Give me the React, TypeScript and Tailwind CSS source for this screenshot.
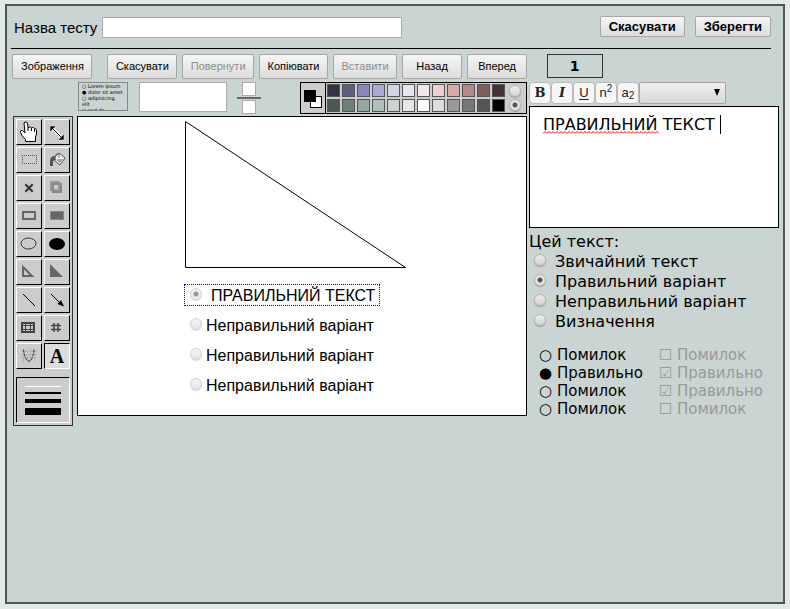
import { useState } from "react";
import type { ReactNode } from "react";

const radioClass =
  "size-3 shrink-0 appearance-none rounded-full border border-[#b4b4b4] bg-linear-to-b from-[#eeeeee] to-[#d4d4d4] shadow-[0_1px_1px_rgba(0,0,0,0.25)] checked:bg-[radial-gradient(circle,#555_0,#555_2px,#e4e4e4_3px)] disabled:opacity-60";

const pushClass =
  "rounded-xs border border-[#a6a6a6] bg-linear-to-b from-[#f6f6f6] to-[#dcdcdc] text-black disabled:text-[#8c8c8c]";

const darkSwatches = [
  "bg-[#333344]", "bg-[#5d5d80]", "bg-[#8888b8]", "bg-[#aaaad8]", "bg-[#d2d2e8]", "bg-[#e6e6f2]",
  "bg-[#f2e6e6]", "bg-[#e8d2d2]", "bg-[#d8aaaa]", "bg-[#b88888]", "bg-[#805d5d]", "bg-[#443333]",
];
const greySwatches = [
  "bg-[#4c5855]", "bg-[#6f807b]", "bg-[#93a8a3]", "bg-[#afbfbb]", "bg-[#cad4d2]", "bg-[#e4e8e6]",
  "bg-white", "bg-[#dddddd]", "bg-[#999999]", "bg-[#777777]", "bg-[#555555]", "bg-black",
];

const commands = [
  { label: "Скасувати" },
  { label: "Повернути", disabled: true },
  { label: "Копіювати" },
  { label: "Вставити", disabled: true },
  { label: "Назад" },
  { label: "Вперед" },
];

const tools: { name: string; icon: ReactNode }[] = [
  {
    name: "Рука",
    icon: (
      <path
        d="M8 2h1.5l1 1 .5 5 1-1h1.5l1 1 1-.5h1l1 1h1l1 1.5v4l-1 3v4.5h-10v-2l-3.5-4-1.5-3V11l1-.5h1L8 13 7 3zM11 8v3M14.500 8v3M17.500 9v3"
        fill="#fff" stroke="#000" strokeWidth="1"
      />
    ),
  },
  {
    name: "Змінити розмір",
    icon: (
      <>
        <path d="M6 7l12 12" stroke="#fff" strokeWidth="3" />
        <path d="M6 7l12 12" stroke="#000" strokeWidth="1" />
        <path d="M5 6h6l-6 6zM19 20h-6l6-6z" stroke="#fff" strokeWidth=".5" fill="#000" />
      </>
    ),
  },
  {
    name: "Виділення",
    icon: (
      <g fill="none" stroke="#555" strokeDasharray="1 1">
        <path d="M5 7.5h15M5 15.5h15" />
        <path d="M5.5 7v9M19.5 7v9" />
      </g>
    ),
  },
  {
    name: "Заливка",
    icon: (
      <>
        <path d="M9 10l5-5 6 5-5 7-5-4z" fill="#eee" stroke="#555" />
        <path d="M14 10V6l-1.500-1L10 8" fill="none" stroke="#777" />
        <path d="M10 8c-3 0-5 2-5 5v5h3v-5l3-1.500z" fill="#555" />
        <path d="M11 11.500l4 3.500 3-4z" fill="#999" />
      </>
    ),
  },
  { name: "Видалити", icon: <path d="M9 9l6 6M15 9l-6 6" stroke="#333" strokeWidth="2" strokeLinecap="square" /> },
  {
    name: "Дублювати",
    icon: (
      <>
        <rect x="6" y="6" width="8" height="8" fill="none" stroke="#999" strokeWidth="2" />
        <rect x="8" y="8" width="8" height="8" fill="none" stroke="#888" strokeWidth="2" />
      </>
    ),
  },
  { name: "Прямокутник", icon: <rect x="6" y="8" width="12" height="7" fill="none" stroke="#666" strokeWidth="2" /> },
  { name: "Заповнений прямокутник", icon: <rect x="5.5" y="7.5" width="13" height="8" fill="#666" stroke="#888" /> },
  { name: "Еліпс", icon: <ellipse cx="11.5" cy="11.5" rx="7.5" ry="5.5" fill="none" stroke="#333" /> },
  { name: "Заповнений еліпс", icon: <ellipse cx="12" cy="12" rx="8" ry="6" fill="#000" /> },
  { name: "Трикутник", icon: <path d="M6 7v9h9z" fill="none" stroke="#666" strokeWidth="2" /> },
  { name: "Заповнений трикутник", icon: <path d="M5 4v13h13z" fill="#666" /> },
  { name: "Лінія", icon: <path d="M6 6l12 12" stroke="#000" /> },
  {
    name: "Стрілка",
    icon: (
      <>
        <path d="M6 6l10 10" stroke="#000" />
        <path d="M19 18.500l-6.500-2.500 3.500-4z" fill="#000" />
      </>
    ),
  },
  {
    name: "Таблиця",
    icon: (
      <>
        <rect x="5" y="7" width="12" height="9" fill="#ccc" stroke="#444" strokeWidth="2" />
        <path d="M5 9.5h12M5 13.5h12M8.500 7v9M13.500 7v9" stroke="#444" />
      </>
    ),
  },
  {
    name: "Сітка",
    icon: <path d="M9 7v9M13 7v9M6 9.500h10M6 13.500h10" stroke="#444" strokeWidth="1.500" />,
  },
  {
    name: "Графік",
    icon: (
      <>
        <path d="M4 7.500h16M4 10.500h16M4 13.500h16M6.500 5v13M10.500 5v13M13.500 5v13M17.500 5v13" stroke="#b4b4b4" />
        <path d="M6.500 5.500c1 8 3 11.500 5.500 11.500s4-3.500 5-11.500" fill="none" stroke="#333" strokeDasharray="3 1" />
      </>
    ),
  },
  {
    name: "Текст",
    icon: (
      <text x="12" y="19" textAnchor="middle" className="font-['Liberation_Serif',serif] text-[20px] font-bold">
        A
      </text>
    ),
  },
];

const answers = ["Неправильний варіант", "Неправильний варіант", "Неправильний варіант"];
const kinds = ["Звичайний текст", "Правильний варіант", "Неправильний варіант", "Визначення"];
const singleChoice = [["○", "Помилок"], ["●", "Правильно"], ["○", "Помилок"], ["○", "Помилок"]];
const multiChoice = [["☐", "Помилок"], ["☑", "Правильно"], ["☑", "Правильно"], ["☐", "Помилок"]];

function Palette() {
  return (
    <div className="ml-auto flex h-8 border border-black bg-[#cccccc]">
      <div className="relative w-[25px] border-r border-black">
        <span className="absolute top-[13px] left-[9px] size-3 border border-black bg-white" />
        <span className="absolute top-[7px] left-[3px] size-3 bg-black" />
      </div>
      <div className="flex flex-col gap-[2px] p-px">
        {[darkSwatches, greySwatches].map((row, r) => (
          <div key={r} className="flex gap-[2px]">
            {row.map((c) => (
              <button key={c} aria-label="Колір" className={`size-[13px] border border-[#555] ${c}`} />
            ))}
          </div>
        ))}
      </div>
      <div className="flex flex-col justify-center gap-[2px] pr-[5px] pl-[3px]">
        <input type="radio" name="target" aria-label="Лінія" className={radioClass} />
        <input type="radio" name="target" aria-label="Заливка" className={radioClass} defaultChecked />
      </div>
    </div>
  );
}

function ToolPanel() {
  const [active, setActive] = useState("Текст");
  return (
    <div className="mt-[34px] ml-[2px] flex w-[60px] shrink-0 flex-col gap-2 self-start border border-[#333] bg-[#cccccc] p-[2px]">
      <div className="grid grid-cols-2 gap-[2px]">
        {tools.map((t) => (
          <button
            key={t.name}
            aria-label={t.name}
            onClick={() => setActive(t.name)}
            className={`size-[26px] border ${
              active === t.name
                ? "border-t-black border-r-white border-b-white border-l-black bg-[#dddddd]"
                : "border-t-white border-r-black border-b-black border-l-white"
            }`}
          >
            <svg viewBox="0 0 24 24" className="size-6">{t.icon}</svg>
          </button>
        ))}
      </div>
      <div className="flex h-[46px] flex-col gap-[5px] border border-t-black border-r-white border-b-white border-l-black px-2 pt-2">
        <button aria-label="Товщина 1" className="h-px bg-white" />
        <button aria-label="Товщина 2" className="h-[2px] bg-black" />
        <button aria-label="Товщина 4" className="h-1 bg-black" />
        <button aria-label="Товщина 7" className="h-[7px] bg-black" />
      </div>
    </div>
  );
}

function Canvas() {
  return (
    <div className="relative h-[300px] border border-black bg-white font-['Liberation_Sans',sans-serif] text-base leading-5">
      <svg className="absolute top-1 left-[107px] h-[148px] w-[224px]" viewBox="0 0 224 148">
        <path d="M.5 .5v146h220z" fill="none" stroke="#000" />
      </svg>
      <label className="absolute top-[167px] left-[106px] flex h-[22px] w-[196px] items-start gap-[9px] border border-dotted border-[#0000cc] pl-[5px] whitespace-nowrap">
        <input type="radio" name="answer" className={`${radioClass} mt-[3px]`} defaultChecked disabled />
        <span className="leading-[22px]">ПРАВИЛЬНИЙ ТЕКСТ</span>
      </label>
      <div className="absolute top-[199px] left-[112px] flex flex-col gap-[10px]">
        {answers.map((a, i) => (
          <label key={i} className="flex items-start gap-1 whitespace-nowrap">
            <input type="radio" name="answer" className={`${radioClass} mt-[2px]`} disabled />
            {a}
          </label>
        ))}
      </div>
    </div>
  );
}

function InsertBar() {
  return (
    <div className="flex h-[34px] items-start">
      <button className="ml-px h-[29px] w-[50px] overflow-hidden border border-[#808a88] px-[3px] text-left font-['DejaVu_Sans',sans-serif] text-[5px] leading-[6px]">
        ○ Lorem ipsum<br />● dolor sit amet<br />○ adipisicing<br />elit<br />○ sed do
      </button>
      <input aria-label="Текст" className="ml-[11px] h-[30px] w-[88px] border border-[#aaaaaa] bg-white px-1" />
      <div className="ml-[10px] flex w-6 flex-col items-center gap-px">
        <input aria-label="Чисельник" className="size-[14px] border border-[#aaaaaa] bg-white" />
        <div className="h-[2px] w-full bg-[#666]" />
        <input aria-label="Знаменник" className="size-[14px] border border-[#aaaaaa] bg-white" />
      </div>
      <Palette />
    </div>
  );
}

function FormatBar() {
  const cls =
    "flex h-[22px] w-[22px] items-center justify-center rounded-sm border border-[#bbbbbb] bg-[#f6f6f6] text-[13px] leading-5 text-[#222]";
  return (
    <div className="flex h-6 items-start">
      <button aria-label="Жирний" className={`${cls} font-['DejaVu_Serif',serif] font-bold`}>B</button>
      <button aria-label="Курсив" className={`${cls} font-['DejaVu_Serif',serif] font-bold italic`}>I</button>
      <button aria-label="Підкреслений" className={`${cls} font-medium underline underline-offset-2`}>U</button>
      <button aria-label="Верхній індекс" className={cls}>
        <span>n</span>
        <span className="pb-2 text-[10px] leading-3">2</span>
      </button>
      <button aria-label="Нижній індекс" className={cls}>
        <span>a</span>
        <span className="pt-[6px] text-[10px] leading-3">2</span>
      </button>
      <div className="relative">
        <select
          aria-label="Шрифт"
          className="h-[22px] w-[87px] appearance-none rounded-xs border border-[#a6a6a6] bg-linear-to-b from-[#f0f0f0] to-[#d8d8d8]"
        />
        <svg viewBox="0 0 6 7" className="pointer-events-none absolute top-[7px] right-[6px] h-[7px] w-[6px]">
          <path d="M0 0h6L3 7z" />
        </svg>
      </div>
    </div>
  );
}

function ChoiceSample({ rows, disabled }: { rows: string[][]; disabled?: boolean }) {
  return (
    <button disabled={disabled} className="flex flex-col text-left text-[15px] leading-[18px] disabled:text-[#999999]">
      {rows.map(([mark, label], i) => (
        <span key={i} className="flex">
          <span className="w-[18px]">{mark}</span>
          {label}
        </span>
      ))}
    </button>
  );
}

function TextPanel() {
  const [text, setText] = useState("ПРАВИЛЬНИЙ ТЕКСТ ");
  return (
    <aside className="w-[250px] shrink-0">
      <FormatBar />
      <div className="relative">
        <textarea
          aria-label="Текст варіанта"
          spellCheck={false}
          value={text}
          onChange={(e) => setText(e.target.value)}
          className="block h-[122px] w-full resize-none border border-black bg-white px-[13px] py-2 font-['DejaVu_Sans',sans-serif] text-base leading-5 outline-none"
        />
        <svg viewBox="0 0 116 3" className="pointer-events-none absolute top-[25px] left-[14px] h-[3px] w-[116px]">
          <defs>
            <pattern id="wave" width="4" height="3" patternUnits="userSpaceOnUse">
              <path d="M0 2.500l2-2 2 2" fill="none" stroke="#f00" strokeWidth="1" />
            </pattern>
          </defs>
          <rect width="116" height="3" fill="url(#wave)" />
        </svg>
        <span className="pointer-events-none absolute top-[9px] left-[191px] h-[19px] w-px bg-black" />
      </div>
      <fieldset className="pt-1 font-['DejaVu_Sans',sans-serif] text-base leading-5">
        <legend className="float-left w-full">Цей текст:</legend>
        <div className="clear-both flex flex-col pl-[5px]">
          {kinds.map((k, i) => (
            <label key={k} className="flex items-start gap-[9px]">
              <input type="radio" name="kind" className={`${radioClass} mt-[2px]`} defaultChecked={i === 1} />
              {k}
            </label>
          ))}
        </div>
      </fieldset>
      <div className="mt-[14px] flex gap-4 pl-[10px] font-['DejaVu_Sans',sans-serif]">
        <ChoiceSample rows={singleChoice} />
        <ChoiceSample rows={multiChoice} disabled />
      </div>
    </aside>
  );
}

export default function App() {
  return (
    <div className="flex min-h-screen bg-[#e4e8e6] px-[5px] pt-1 pb-[5px] font-['Liberation_Sans',sans-serif] text-black">
      <div className="min-w-0 flex-1 border-2 border-[#4c5855] bg-[#cad4d2] px-1">
        <header className="mr-2 flex h-[43px] items-start border-b border-black pt-[10px] pl-[3px]">
          <label htmlFor="title" className="mr-[5px] text-[15px] leading-6">Назва тесту</label>
          <input id="title" className="mt-px h-[21px] w-[300px] border border-[#aaaaaa] bg-white px-1 text-sm" />
          <div className="ml-auto flex gap-[10px]">
            <button className={`${pushClass} h-[21px] px-2 text-[13px] leading-[19px] font-bold`}>Скасувати</button>
            <button className={`${pushClass} h-[21px] px-2 text-[13px] leading-[19px] font-bold`}>Зберегти</button>
          </div>
        </header>
        <nav className="flex h-[33px] items-start gap-[5px] pt-[5px] pl-px text-[11px]">
          <button className={`${pushClass} mr-[10px] h-[25px] pr-[7px] pl-2`}>Зображення</button>
          {commands.map((c) => (
            <button key={c.label} disabled={c.disabled} className={`${pushClass} h-[25px] min-w-[60px] pr-[7px] pl-2`}>
              {c.label}
            </button>
          ))}
          <div className="ml-[15px] h-6 w-14 border border-[#333] text-center font-['DejaVu_Sans',sans-serif] text-sm leading-[22px] font-bold">
            1
          </div>
        </nav>
        <main className="flex gap-[2px]">
          <div className="flex min-w-0 flex-1 gap-1">
            <ToolPanel />
            <div className="min-w-0 flex-1">
              <InsertBar />
              <Canvas />
            </div>
          </div>
          <TextPanel />
        </main>
      </div>
    </div>
  );
}
